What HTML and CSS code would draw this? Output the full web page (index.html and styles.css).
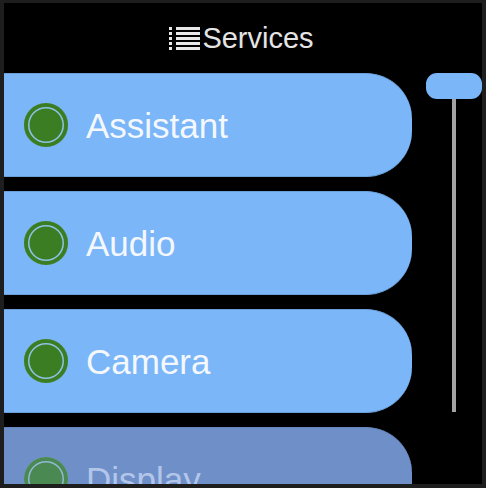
FILE: index.html
```html
<!DOCTYPE html>
<html lang="en">
<head>
    <meta charset="UTF-8">
    <meta name="viewport" content="width=device-width, initial-scale=1.0">
    <title>Services</title>
    <link rel="stylesheet" href="styles.css">
</head>
<body>

<div class="screen">
    <header class="title">
        <svg class="title-icon" width="31" height="23" viewBox="0 0 31 23">
            <g fill="#e8e8e8">
                <rect x="0" y="0" width="3" height="3"/>
                <rect x="0" y="5" width="3" height="3"/>
                <rect x="0" y="10" width="3" height="3"/>
                <rect x="0" y="15" width="3" height="3"/>
                <rect x="0" y="20" width="3" height="3"/>
                <rect x="7" y="0" width="24" height="3"/>
                <rect x="7" y="5" width="24" height="3"/>
                <rect x="7" y="10" width="24" height="3"/>
                <rect x="7" y="15" width="24" height="3"/>
                <rect x="7" y="20" width="24" height="3"/>
            </g>
        </svg>
        <span>Services</span>
    </header>

    <div class="content">
        <ul class="service-list">
            <li class="service">
                <span class="radio"></span>
                <span class="service-name">Assistant</span>
            </li>
            <li class="service">
                <span class="radio"></span>
                <span class="service-name">Audio</span>
            </li>
            <li class="service">
                <span class="radio"></span>
                <span class="service-name">Camera</span>
            </li>
            <li class="service faded">
                <span class="radio"></span>
                <span class="service-name">Display</span>
            </li>
        </ul>

        <div class="scrollbar">
            <div class="thumb"></div>
            <div class="track"></div>
        </div>
    </div>
</div>

</body>
</html>
```

FILE: styles.css
```css
body {
    margin: 0;
    padding: 3px 4px 4px 4px;
    background-color: #1e1e1e;
    font-family: 'Liberation Sans', Arial, sans-serif;
}

.screen {
    width: 478px;
    height: 481px;
    background-color: #000;
    display: flex;
    flex-direction: column;
    overflow: hidden;
}

.title {
    height: 70px;
    display: flex;
    align-items: center;
    justify-content: center;
    gap: 2px;
    color: #e4e4e4;
    font-size: 29px;
    line-height: 29px;
    padding-right: 3px;
    flex-shrink: 0;
}

.title-icon {
    display: block;
    margin-top: 1px;
}

.content {
    flex: 1;
    display: flex;
    gap: 14px;
    min-height: 0;
}

.service-list {
    list-style: none;
    margin: 0;
    padding: 0;
    width: 408px;
    display: flex;
    flex-direction: column;
    gap: 14px;
    overflow: hidden;
}

.service {
    flex-shrink: 0;
    height: 104px;
    box-sizing: border-box;
    background-color: #7ab6f8;
    border-top: 1px solid #6a9fd9;
    border-bottom: 1px solid #6a9fd9;
    border-radius: 0 46px 46px 0;
    display: flex;
    align-items: center;
    padding-left: 20px;
    gap: 18px;
}

.radio {
    width: 44px;
    height: 44px;
    border-radius: 50%;
    background-color: #3b7d23;
    box-shadow: inset 0 0 0 4px #3b7d23, inset 0 0 0 5.5px #8fc3e6;
    flex-shrink: 0;
}

.service-name {
    color: #f4f8fd;
    font-size: 35px;
    line-height: 35px;
}

.service.faded {
    background-color: #6e8fc7;
    border-color: #6385bc;
}

.service.faded .radio {
    background-color: #4a8a52;
    box-shadow: inset 0 0 0 4px #4a8a52, inset 0 0 0 5.5px #93b8d6;
}

.service.faded .service-name {
    color: #b3c6ea;
}

.scrollbar {
    width: 56px;
    display: flex;
    flex-direction: column;
    align-items: center;
}

.thumb {
    width: 56px;
    height: 26px;
    border-radius: 11px;
    background-color: #7ab6f8;
}

.track {
    width: 4px;
    height: 313px;
    background-color: #a3a3a3;
}
```
